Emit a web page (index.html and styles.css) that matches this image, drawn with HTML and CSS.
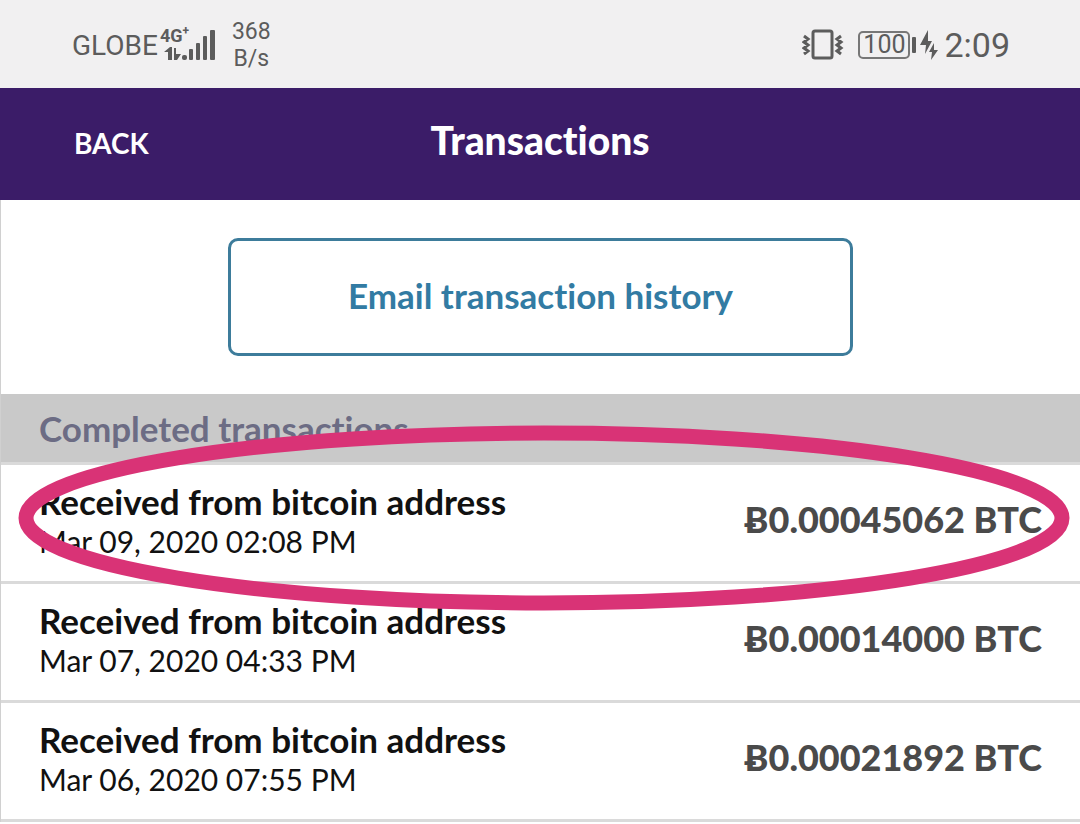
FILE: index.html
```html
<!DOCTYPE html>
<html lang="en">
<head>
<meta charset="UTF-8">
<meta name="viewport" content="width=device-width, initial-scale=1">
<title>Transactions</title>
<link rel="stylesheet" href="styles.css">
</head>
<body>

<!-- phone status bar -->
<div class="status">
	<div class="status_left">
		<span class="carrier">GLOBE</span>
		<div class="network">
			<span class="network_type">4G<sup>+</sup></span>
			<svg class="signal" width="56" height="36" viewBox="0 0 56 36" fill="#5c5c5c">
				<path d="M8 33V25H4L10 20H12V33ZM14 21H16V27H21L17 33H14Z"/>
				<rect x="22" y="28" width="5" height="5" rx="2"/>
				<rect x="29" y="22" width="4" height="11" rx="1"/>
				<rect x="36" y="16" width="4" height="17" rx="1"/>
				<rect x="43" y="9" width="4" height="24" rx="1"/>
				<rect x="50" y="3" width="5" height="30" rx="1"/>
			</svg>
		</div>
		<div class="speed"><span>368</span><span>B/s</span></div>
	</div>
	<div class="status_right">
		<svg width="42" height="34" viewBox="0 0 42 34" fill="none" stroke="#5c5c5c" stroke-width="3">
			<rect x="11" y="3" width="19" height="27" rx="2"/>
			<path d="M2 8L6 11L2 14L6 17L2 20L6 23L2 26M39 8L35 11L39 14L35 17L39 20L35 23L39 26"/>
		</svg>
		<div class="battery"><span class="battery_level">100</span></div>
		<svg width="18" height="34" viewBox="0 0 18 34" fill="#5c5c5c">
			<path d="M8 2L0 17H6L5 26L12 13H8ZM14 15L9 24H12L11 32L18 22H14Z"/>
		</svg>
		<span class="clock">2:09</span>
	</div>
</div>

<header class="header">
	<button class="back" type="button">BACK</button>
	<h1>Transactions</h1>
</header>

<main>
	<div class="email_box">
		<button class="email" type="button">Email transaction history</button>
	</div>

	<section class="completed">
		<h2>Completed transactions</h2>
		<ul class="list">
			<li>
				<div class="detail">
					<span class="name">Received from bitcoin address</span>
					<span class="date">Mar 09, 2020 02:08 PM</span>
				</div>
				<span class="amount">Ƀ0.00045062 BTC</span>
			</li>
			<li>
				<div class="detail">
					<span class="name">Received from bitcoin address</span>
					<span class="date">Mar 07, 2020 04:33 PM</span>
				</div>
				<span class="amount">Ƀ0.00014000 BTC</span>
			</li>
			<li>
				<div class="detail">
					<span class="name">Received from bitcoin address</span>
					<span class="date">Mar 06, 2020 07:55 PM</span>
				</div>
				<span class="amount">Ƀ0.00021892 BTC</span>
			</li>
		</ul>
		<!-- marker drawn round the newest transaction -->
		<svg class="marker" aria-hidden="true">
			<ellipse cx="50%" cy="50%" rx="50%" ry="50%"/>
		</svg>
	</section>
</main>

</body>
</html>
```
FILE: styles.css
```css
*{
	box-sizing:border-box;
}
body{
	margin:0;
	background-color:#ffffff;
	color:#111111;
	font-family:Lato, "Liberation Sans", sans-serif;
	font-variant-ligatures:none;
}
button{
	font-family:inherit;
	font-variant-ligatures:none;
	cursor:pointer;
}
main{
	border-left:1px solid #d0d0d0;
}

/* status bar */
.status{
	display:flex; justify-content:space-between; align-items:center;
	height:88px; padding:2px 70px 0 72px;
	background-color:#f1f0f1; color:#5c5c5c;
	font-family:Roboto, sans-serif;
}
.status_left, .status_right{
	display:flex; align-items:center;
}
.carrier{
	font-size:28px;
}
.network{
	position:relative;
	margin-left:2px;
}
.network_type{
	position:absolute; left:0; top:0;
	font-size:18px; line-height:18px; font-weight:bold;
}
.network_type sup{
	font-size:12px; line-height:0;
}
.signal{
	display:block;
}
.speed{
	display:flex; flex-direction:column; align-items:center;
	margin-left:16px;
	font-size:23px; line-height:27px;
}
.battery{
	display:flex; align-items:center;
	margin:0 4px 0 14px;
}
.battery_level{
	width:52px;
	border:2px solid #777777; border-radius:5px;
	font-size:25px; line-height:24px; text-align:center;
}
.battery::after{
	content:"";
	width:4px; height:16px; margin-left:2px;
	border-radius:1px; background-color:#5c5c5c;
}
.clock{
	margin-left:6px;
	font-size:34px;
}

/* header */
.header{
	display:grid; grid-template-columns:1fr auto 1fr; align-items:center;
	height:112px; padding:0 74px;
	background-color:#3b1c68; color:#ffffff;
}
.back{
	justify-self:start;
	padding:0 0 2px; border:0;
	background:none; color:#ffffff;
	font-size:28px; font-weight:bold;
}
h1{
	margin:0 0 8px;
	font-size:39px; line-height:44px; font-weight:900;
}

/* email button */
.email_box{
	display:flex; justify-content:center;
	padding:38px 36px;
}
.email{
	width:62%; height:118px;
	padding:0 0 4px;
	border:3px solid #3d7c9b; border-radius:10px;
	background-color:#ffffff; color:#327ba3;
	font-size:35px; font-weight:bold;
}

/* transactions */
.completed{
	position:relative;
}
h2{
	margin:0; padding:0 38px;
	border-bottom:3px solid #dadada;
	background-color:#c9c9c9; color:#6c6c84;
	font-size:35px; line-height:68px; font-weight:bold;
}
.list{
	margin:0; padding:0;
	list-style:none;
}
.list li{
	display:flex; justify-content:space-between; align-items:center;
	padding:16px 38px 20px;
	border-bottom:3px solid #dadada;
}
.detail{
	display:flex; flex-direction:column;
}
.name{
	font-size:35px; line-height:40px; font-weight:bold;
}
.date{
	font-size:30px; line-height:40px;
}
.amount{
	padding-bottom:4px;
	color:#4a4a4a;
	font-size:36px; font-weight:900;
}
.marker{
	position:absolute; left:25px; top:39px;
	width:calc(100% - 43px); height:170px;
	overflow:visible; pointer-events:none;
	fill:none; stroke:#d93376; stroke-width:15px;
}
```
